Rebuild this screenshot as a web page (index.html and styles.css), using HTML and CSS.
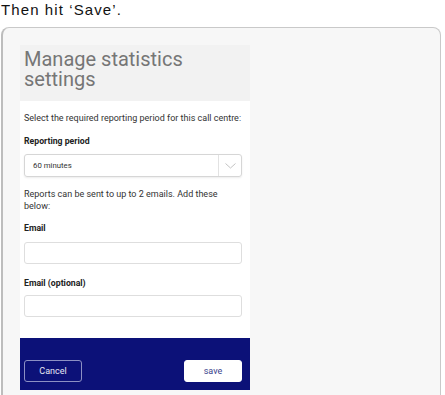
FILE: index.html
```html
<!DOCTYPE html>
<html lang="en">
<head>
    <meta charset="UTF-8">
    <title>Manage statistics settings</title>
    <link rel="stylesheet" href="styles.css">
</head>
<body>
    <p class="intro">Then hit ‘Save’.</p>

    <div class="frame">
        <div class="panel">
            <div class="panel-head">
                <h2>Manage statistics settings</h2>
            </div>

            <div class="panel-body">
                <p class="hint">Select the required reporting period for this call centre:</p>
                <label class="field-label">Reporting period</label>
                <div class="select-box">
                    <span class="select-value">60 minutes</span>
                    <span class="select-arrow">
                        <svg width="11" height="6" viewBox="0 0 11 6">
                            <polyline points="0.5,0.5 5.5,5 10.5,0.5" fill="none" stroke="#c4c4c4" stroke-width="1"></polyline>
                        </svg>
                    </span>
                </div>

                <p class="hint hint-emails">Reports can be sent to up to 2 emails. Add these below:</p>
                <label class="field-label label-email">Email</label>
                <input type="text" class="text-input input-first">
                <label class="field-label label-optional">Email (optional)</label>
                <input type="text" class="text-input input-second">
            </div>

            <div class="panel-foot">
                <button class="btn-cancel">Cancel</button>
                <button class="btn-save">save</button>
            </div>
        </div>
    </div>
</body>
</html>
```

FILE: styles.css
```css
* {
    margin: 0;
    padding: 0;
    box-sizing: border-box;
}

html, body {
    overflow: hidden;
}

body {
    background: #ffffff;
    font-family: 'Liberation Sans', Arial, sans-serif;
    height: 395px;
}

.intro {
    font-size: 15px;
    line-height: 17px;
    letter-spacing: 1.1px;
    color: #111;
    padding: 1px 0 0 1px;
}

.frame {
    margin: 9px 0 0 1px;
    width: 440px;
    height: 380px;
    background: #f7f7f7;
    border: 1px solid #c9c9c9;
    border-left: 2px solid #bdbdbd;
    border-radius: 8px;
    padding: 17px 0 0 17px;
}

.panel {
    width: 230px;
    font-family: Roboto, 'Noto Sans', sans-serif;
}

.panel-head {
    height: 56px;
    background: #f2f2f2;
    padding: 5px 0 0 4px;
}

.panel-head h2 {
    font-size: 20px;
    line-height: 19.5px;
    font-weight: 400;
    color: #767676;
}

.panel-body {
    background: #ffffff;
    padding: 11px 8px 21px 4px;
    display: flex;
    flex-direction: column;
}

.hint {
    font-size: 9px;
    line-height: 12px;
    color: #333;
}

.field-label {
    font-size: 8.7px;
    line-height: 12px;
    font-weight: 700;
    color: #222;
    margin-top: 11px;
}

.select-box {
    margin-top: 7px;
    height: 23px;
    display: flex;
    align-items: stretch;
    border: 1px solid #d6d6d6;
    border-radius: 3px;
    box-shadow: 0 1px 2px rgba(0, 0, 0, 0.08);
}

.select-value {
    flex: 1;
    display: flex;
    align-items: center;
    padding-left: 8px;
    font-size: 7.8px;
    color: #333;
}

.select-arrow {
    width: 23px;
    border-left: 1px solid #e2e2e2;
    display: flex;
    align-items: center;
    justify-content: center;
}

.hint-emails {
    margin-top: 11px;
}

.label-email {
    margin-top: 10px;
}

.text-input {
    height: 22px;
    border: 1px solid #dedede;
    border-radius: 3px;
    background: #fff;
}

.input-first {
    margin-top: 8px;
}

.label-optional {
    margin-top: 13px;
}

.input-second {
    margin-top: 6px;
}

.panel-foot {
    height: 52px;
    background: #0c1178;
    padding: 22px 8px 0 4px;
    display: flex;
    justify-content: space-between;
    align-items: flex-start;
}

.panel-foot button {
    width: 58px;
    height: 22px;
    border-radius: 3px;
    font-family: Roboto, 'Noto Sans', sans-serif;
    font-size: 9px;
    cursor: pointer;
}

.btn-cancel {
    background: transparent;
    border: 1px solid #8c90c4;
    color: #e6e7f2;
}

.btn-save {
    background: #ffffff;
    border: 1px solid #ffffff;
    color: #3a3f8c;
}
```
